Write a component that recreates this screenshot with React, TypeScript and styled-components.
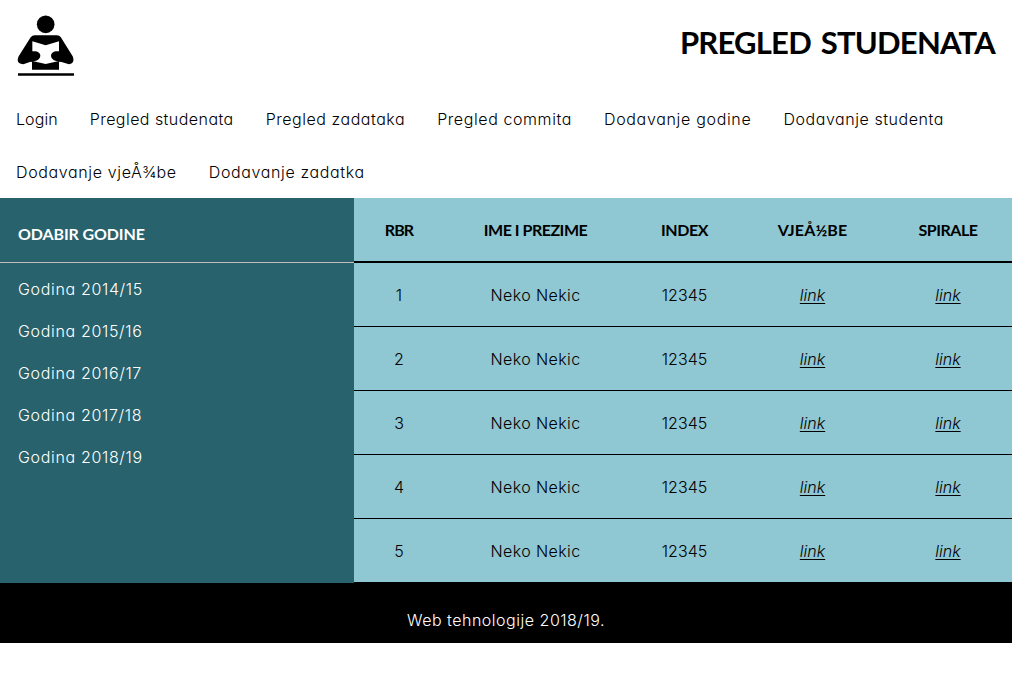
import React from "react";
import styled, { createGlobalStyle } from "styled-components";

const GlobalStyle = createGlobalStyle`
  *, *::before, *::after { box-sizing: border-box; }
  body {
    margin: 0;
    background: #fff;
    color: #000;
    font-family: Inter, "Liberation Sans", sans-serif;
    font-size: 16px;
    font-weight: 300;
    font-feature-settings: "cv11";
  }
`;

const Header = styled.header`
  display: flex;
  justify-content: space-between;
  align-items: flex-start;
  height: 93px;
  padding: 15px 17px 0 17px;
`;

const Logo = styled.svg`
  display: block;
  width: 57px;
  height: 61px;
`;

const Title = styled.h1`
  margin: 5px 0 0;
  font: 700 31px/44px Lato, sans-serif;
  letter-spacing: -0.77px;
  word-spacing: 3px;
`;

const Nav = styled.nav`
  display: flex;
  flex-wrap: wrap;
  column-gap: 32px;
  height: 105px;
  padding: 0 16px;
`;

const NavLink = styled.a<{ $tracking: number }>`
  height: 53px;
  line-height: 53px;
  white-space: nowrap;
  letter-spacing: ${(p) => p.$tracking}px;
`;

const Main = styled.main`
  display: flex;
  height: 385px;
`;

const Sidebar = styled.aside`
  width: 354px;
  background: #28626c;
  color: #fff;
`;

const SidebarTitle = styled.h2`
  margin: 0;
  height: 65px;
  padding: 4px 18px 0;
  border-bottom: 1px solid #c8bcbc;
  font: 700 16px/64px Lato, sans-serif;
  letter-spacing: -0.12px;
`;

const YearList = styled.ul`
  margin: 0;
  padding: 5px 18px;
  list-style: none;
`;

const Year = styled.li`
  line-height: 42px;
  letter-spacing: 0.66px;
`;

const Table = styled.table`
  flex: 1;
  table-layout: fixed;
  border-collapse: separate;
  border-spacing: 0;
  background: #8fc7d2;
  text-align: center;
`;

const Col = styled.col<{ $width: number }>`
  width: ${(p) => p.$width}px;
`;

const HeadCell = styled.th<{ $tracking: number }>`
  height: 65px;
  padding: 0;
  border-bottom: 2px solid #000;
  font: 700 16px/63px Lato, sans-serif;
  letter-spacing: ${(p) => p.$tracking}px;

  &:last-child { padding-left: 1px; }
`;

const Cell = styled.td<{ $tracking?: number }>`
  height: 64px;
  padding: 0;
  border-bottom: 1px solid #000;
  letter-spacing: ${(p) => p.$tracking ?? 0}px;

  &:last-child { padding-left: 1px; }
`;

const TextLink = styled.a`
  font-style: italic;
  text-decoration: underline;
  text-underline-offset: 2px;
`;

const Footer = styled.footer`
  height: 60px;
  padding-top: 7px;
  background: #000;
  color: #fff;
  line-height: 60px;
  text-align: center;
  letter-spacing: 0.51px;
`;

const links: [string, number][] = [
  ["Login", 0.08],
  ["Pregled studenata", 0.45],
  ["Pregled zadataka", 0.535],
  ["Pregled commita", 0.59],
  ["Dodavanje godine", 0.68],
  ["Dodavanje studenta", 0.557],
  ["Dodavanje vjeÅ¾be", 0.64],
  ["Dodavanje zadatka", 0.63],
];

const years = ["2014/15", "2015/16", "2016/17", "2017/18", "2018/19"];

const columns: { label: string; width: number; tracking: number }[] = [
  { label: "RBR", width: 90, tracking: -0.9 },
  { label: "IME I PREZIME", width: 183, tracking: -0.48 },
  { label: "INDEX", width: 115, tracking: -0.4 },
  { label: "VJEÅ½BE", width: 141, tracking: 0.15 },
  { label: "SPIRALE", width: 129, tracking: -0.47 },
];

const rows = [1, 2, 3, 4, 5];

function ReaderLogo() {
  return (
    <Logo viewBox="51 46 171 183" aria-hidden="true">
      <circle cx="137" cy="74" r="26.5" />
      <path d="M104 107H171Q178 107 182 112L218 170Q226 190 207 194L177 185V210H96V185L70 194Q46 192 56 170L92 113Q97 107 104 107Z" />
      <path fill="#fff" d="M97 125L137 137L177 125V184L137 193L97 184Z" />
      <path d="M92 155H108Q121 159 121 168Q120 179 108 183L92 187Z" />
      <path d="M182 155H166Q153 159 153 168Q154 179 166 183L182 187Z" />
      <path d="M54 221H222V228H54Z" />
    </Logo>
  );
}

export default function App() {
  return (
    <>
      <GlobalStyle />
      <Header>
        <ReaderLogo />
        <Title>PREGLED STUDENATA</Title>
      </Header>
      <Nav>
        {links.map(([label, tracking]) => (
          <NavLink key={label} $tracking={tracking}>{label}</NavLink>
        ))}
      </Nav>
      <Main>
        <Sidebar>
          <SidebarTitle>ODABIR GODINE</SidebarTitle>
          <YearList>
            {years.map((y) => (
              <Year key={y}>Godina {y}</Year>
            ))}
          </YearList>
        </Sidebar>
        <Table>
          <colgroup>
            {columns.map((c) => <Col key={c.label} $width={c.width} />)}
          </colgroup>
          <thead>
            <tr>
              {columns.map((c) => (
                <HeadCell key={c.label} $tracking={c.tracking}>{c.label}</HeadCell>
              ))}
            </tr>
          </thead>
          <tbody>
            {rows.map((n) => (
              <tr key={n}>
                <Cell>{n}</Cell>
                <Cell $tracking={0.4}>Neko Nekic</Cell>
                <Cell>12345</Cell>
                <Cell><TextLink>link</TextLink></Cell>
                <Cell><TextLink>link</TextLink></Cell>
              </tr>
            ))}
          </tbody>
        </Table>
      </Main>
      <Footer>Web tehnologije 2018/19.</Footer>
    </>
  );
}
